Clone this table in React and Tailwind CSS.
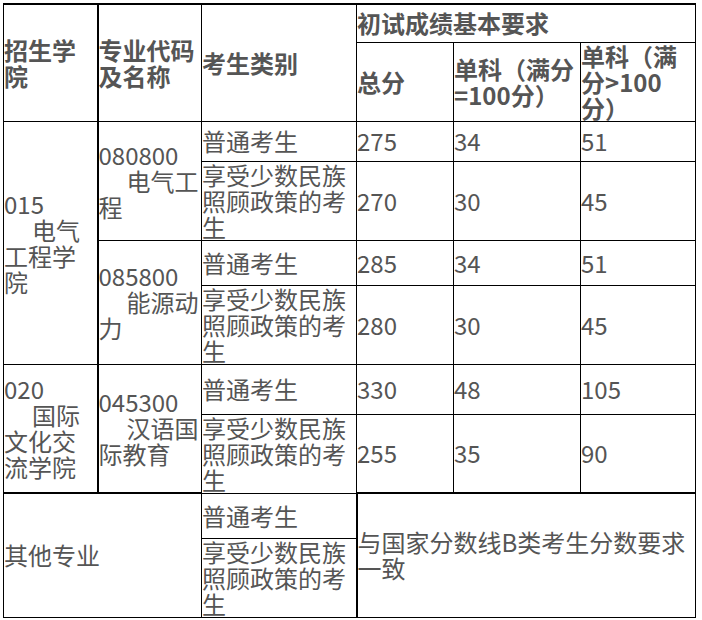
import React from 'react';

const ink = 'text-[#555555]';
const cell = 'border border-black p-0 align-middle';

const Lines = ({ lines, indent = [] }) => (
  <div className="leading-[26px]">
    {lines.map((t, i) => (
      <div key={i} className={indent.includes(i) ? 'pl-[28px]' : ''}>
        {t}
      </div>
    ))}
  </div>
);

const MINORITY = ['享受少数民族', '照顾政策的考', '生'];

const App = () => {
  return (
    <div
      className={`bg-white w-[702px] h-[620px] pt-[3px] pl-[3px] ${ink}`}
      style={{ fontFamily: '"Noto Sans CJK SC", "Noto Sans", sans-serif' }}
    >
      <table className="table-fixed border-collapse text-[24px] leading-[26px]">
        <colgroup>
          <col className="w-[94px]" />
          <col className="w-[104px]" />
          <col className="w-[155px]" />
          <col className="w-[97px]" />
          <col className="w-[127px]" />
          <col className="w-[115px]" />
        </colgroup>
        <tbody>
          {/* header */}
          <tr className="h-[38px] font-bold">
            <td rowSpan={2} className={`${cell} border-t-2 border-r-2`}>
              <Lines lines={['招生学', '院']} />
            </td>
            <td rowSpan={2} className={`${cell} border-t-2 border-l-2`}>
              <Lines lines={['专业代码', '及名称']} />
            </td>
            <td rowSpan={2} className={`${cell} border-t-2`}>考生类别</td>
            <td colSpan={3} className={`${cell} border-t-2`}>初试成绩基本要求</td>
          </tr>
          <tr className="h-[79px] font-bold">
            <td className={cell}>总分</td>
            <td className={cell}>
              <Lines lines={['单科（满分', '=100分）']} />
            </td>
            <td className={cell}>
              <Lines lines={['单科（满', '分>100', '分）']} />
            </td>
          </tr>

          {/* 015 电气工程学院 */}
          <tr className="h-[40px]">
            <td rowSpan={4} className={`${cell} border-r-2`}>
              <Lines lines={['015', '电气', '工程学', '院']} indent={[1]} />
            </td>
            <td rowSpan={2} className={`${cell} border-l-2`}>
              <Lines lines={['080800', '电气工', '程']} indent={[1]} />
            </td>
            <td className={cell}>普通考生</td>
            <td className={cell}>275</td>
            <td className={cell}>34</td>
            <td className={cell}>51</td>
          </tr>
          <tr className="h-[78px]">
            <td className={cell}>
              <Lines lines={MINORITY} />
            </td>
            <td className={cell}>270</td>
            <td className={cell}>30</td>
            <td className={cell}>45</td>
          </tr>
          <tr className="h-[45px]">
            <td rowSpan={2} className={`${cell} border-l-2`}>
              <Lines lines={['085800', '能源动', '力']} indent={[1]} />
            </td>
            <td className={cell}>普通考生</td>
            <td className={cell}>285</td>
            <td className={cell}>34</td>
            <td className={cell}>51</td>
          </tr>
          <tr className="h-[79px]">
            <td className={cell}>
              <Lines lines={MINORITY} />
            </td>
            <td className={cell}>280</td>
            <td className={cell}>30</td>
            <td className={cell}>45</td>
          </tr>

          {/* 020 国际文化交流学院 */}
          <tr className="h-[50px]">
            <td rowSpan={2} className={`${cell} border-r-2`}>
              <Lines lines={['020', '国际', '文化交', '流学院']} indent={[1]} />
            </td>
            <td rowSpan={2} className={`${cell} border-l-2`}>
              <Lines lines={['045300', '汉语国', '际教育']} indent={[1]} />
            </td>
            <td className={cell}>普通考生</td>
            <td className={cell}>330</td>
            <td className={cell}>48</td>
            <td className={cell}>105</td>
          </tr>
          <tr className="h-[79px]">
            <td className={cell}>
              <Lines lines={MINORITY} />
            </td>
            <td className={cell}>255</td>
            <td className={cell}>35</td>
            <td className={cell}>90</td>
          </tr>

          {/* 其他专业 */}
          <tr className="h-[45px]">
            <td rowSpan={2} colSpan={2} className={`${cell} border-t-2`}>其他专业</td>
            <td className={cell}>普通考生</td>
            <td rowSpan={2} colSpan={3} className={`${cell} border-t-2 border-l-2`}>
              <Lines lines={['与国家分数线B类考生分数要求', '一致']} />
            </td>
          </tr>
          <tr className="h-[79px]">
            <td className={cell}>
              <Lines lines={MINORITY} />
            </td>
          </tr>
        </tbody>
      </table>
    </div>
  );
};

export default App;
